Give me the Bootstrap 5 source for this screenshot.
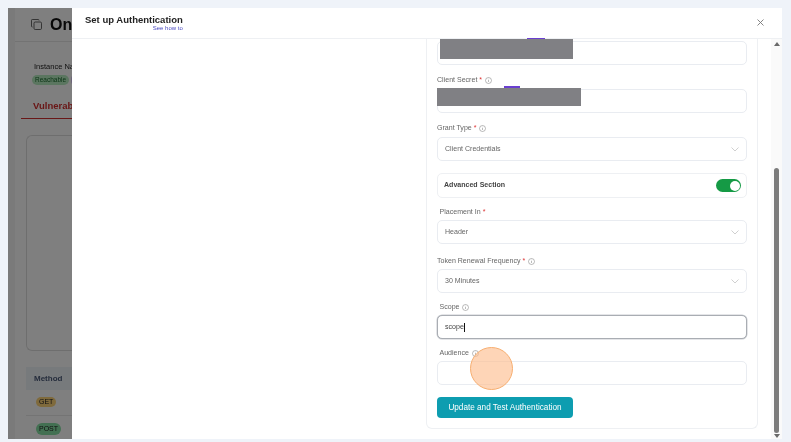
<!DOCTYPE html>
<html lang="en">
<head>
<meta charset="utf-8">
<title>Set up Authentication</title>
<link rel="stylesheet" href="https://cdn.jsdelivr.net/npm/bootstrap@5.3.0/dist/css/bootstrap.min.css">
<style>
html,body{height:100%;overflow:hidden}
body{background:#eff3f9;font-family:"Liberation Sans",Arial,sans-serif;color:#333}
.shot{position:absolute;left:8px;top:8px;width:774px;height:431px;overflow:hidden;background:#fff;filter:blur(.45px)}
/* page behind the dialog */
.under{width:64px;height:431px;background:#fff;overflow:hidden;padding-left:7px;white-space:nowrap;border-left:7px solid #f4f4f4;box-sizing:border-box}
.under-head{height:34px;border-bottom:1px solid #e6e6e6;margin-left:-7px;padding:0 0 0 16px;font-size:16px;font-weight:700;color:#111;line-height:32px}
.under-head svg{flex:none}
.under-meta{font-size:7.5px;color:#222;margin:20px 0 0 12px;line-height:10px}
.under-pillrow{line-height:10px;height:10px;margin:3px 0 0 10px}
.under-pill{font-size:6.5px;border-radius:6px;line-height:10px;padding:0 3px;background:#b7ecc0;color:#186a2d;display:inline-block;vertical-align:top}
.under-pill-b{background:#d9c8f5;width:8px;height:10px;margin-left:2px;padding:0}
.under-tab{margin-top:15px;padding:0 0 7px 12px;color:#d32f2f;font-weight:700;font-size:9.5px;border-bottom:1.5px solid #d32f2f;margin-left:-1px;line-height:11px}
.under-card{height:216px;margin:16px 0 0 4px;border:1px solid #ddd;border-right:0;border-radius:6px 0 0 6px}
.under-th{height:23px;margin:16px 0 0 4px;background:#eff4f9;color:#4a5a78;font-weight:700;font-size:8px;line-height:23px;padding-left:8px}
.under-td{height:26px;margin-left:4px;border-bottom:1px solid #e8e8e8;padding:7px 0 0 10px;line-height:12px}
.verb{display:inline-block;font-size:7px;line-height:10px;padding:0 3px;border-radius:6px;color:#222;vertical-align:top}
.verb-get{background:#ffd479}.verb-post{background:#86e0a4;line-height:12px}
.scrim{position:absolute;inset:0;background:rgba(0,0,0,.5)}
/* dialog */
.dialog{position:absolute;left:64px;top:0;right:0;bottom:0;width:auto;background:#fff;border:0;border-radius:0;display:flex;flex-direction:column}
.dlg-head{height:31px;flex:none;padding:0 13px;border-bottom:1px solid #eef0f3;display:flex;justify-content:space-between;align-items:flex-start}
.dlg-title{font-size:9.5px;font-weight:700;color:#222;line-height:12px;margin-top:6px}
.dlg-sub{font-size:6px;line-height:6px;color:#4a4ac0;text-align:right;margin-top:-1px}
.dlg-x{margin:11px 5px 0 0;display:block}
.dlg-body{flex:1;min-height:0;display:flex;justify-content:flex-end}
.auth-card{width:332px;height:390px;margin-right:13px;border:1px solid #eef0f3;border-top:0;border-radius:0 0 6px 6px;padding:2px 10px 0 10px}
.lbl{display:flex;align-items:center;height:10px;line-height:10px;font-size:7.05px;color:#666;margin:10px 0 4px;white-space:nowrap}
.lbl svg{margin-left:3px}
.lbl-in{padding-left:2.5px;margin:9px 0 3px}
.lbl-far{margin-top:12px;margin-bottom:3px}
.req{color:#d33;margin-left:2px}
.fld{height:24px;border:1px solid #e9ecf1;border-radius:5px;font-size:7.05px;color:#666;padding:0 7px;line-height:22px;box-shadow:none;min-height:0;background-color:#fff}
.fld-drop{background-image:none;display:flex;align-items:center;justify-content:space-between}
.fld-on{border:1px solid #a9adb3;box-shadow:0 0 0 .5px #c9ccd1;color:#444;display:flex;align-items:center}
.caret{display:inline-block;width:.7px;height:9px;background:#111}
.adv-row{height:25px;margin-top:12px;border:1px solid #eef0f3;border-radius:5px;padding:0 5px 0 6px;display:flex;align-items:center;justify-content:space-between;font-size:7.05px;font-weight:700;color:#444}
.toggle{width:25px;height:13px;border-radius:7px;background:#159a45;position:relative;display:block}
.toggle::after{content:"";position:absolute;right:1.5px;top:1.5px;width:10px;height:10px;border-radius:50%;background:#fff}
.go-btn{width:136px;height:21px;margin-top:12px;padding:0;background:#0d9db0;border:0;border-radius:4px;color:#fff;font-size:8.2px;line-height:21px}
.track{width:11px;flex:none;background:#fafafa;display:flex;flex-direction:column;align-items:center;padding:3px 0 1px 0}
.arr-up,.arr-dn{width:0;height:0;border-left:3px solid transparent;border-right:3px solid transparent}
.arr-up{border-bottom:4px solid #6a6a6a}
.arr-dn{border-top:4px solid #6a6a6a}
.thumb{width:5px;height:265px;margin:auto 0 1px;background:#7c7c7c;border-radius:3px}
/* redactions and click marker lie over the form */
.redact{position:absolute;background:#808084}
.redact-a{left:432px;top:31px;width:133px;height:20px}
.redact-b{left:428.5px;top:79.5px;width:144px;height:18.5px}
.tick{position:absolute;background:#6a3fd0;height:1.5px}
.tick-a{left:519px;top:30px;width:18px}
.tick-b{left:496px;top:78px;width:16px}
.spot{position:absolute;left:461.5px;top:339px;width:43px;height:43px;border-radius:50%;background:rgba(253,190,145,.65);border:1.5px solid #f7ae70}
</style>
</head>
<body>
<div class="shot">
  <div class="under">
    <div class="under-head d-flex align-items-center gap-2">
      <svg width="11" height="11" viewBox="0 0 11 11" fill="none" stroke="#444" stroke-width=".8"><rect x="3" y="3" width="7.5" height="7.5" rx="1.2"/><path d="M8 1.5V1.2A.8.8 0 0 0 7.2.5H1.3a.8.8 0 0 0-.8.8v5.9a.8.8 0 0 0 .8.8h.3"/></svg>
      <span>Onl</span>
    </div>
    <div class="under-meta">Instance Na</div>
    <div class="under-pillrow"><span class="under-pill">Reachable</span><span class="under-pill under-pill-b"></span></div>
    <div class="under-tab">Vulnerabi</div>
    <div class="under-card"></div>
    <div class="under-th">Method</div>
    <div class="under-td"><span class="verb verb-get">GET</span></div>
    <div class="under-td"><span class="verb verb-post">POST</span></div>
  </div>
  <div class="scrim"></div>

  <div class="modal-content dialog">
    <div class="dlg-head">
      <div>
        <div class="dlg-title">Set up Authentication</div>
        <div class="dlg-sub">See how to</div>
      </div>
      <svg class="dlg-x" width="7" height="7" viewBox="0 0 7 7" stroke="#777" stroke-width=".9"><path d="M.5.5l6 6M6.5.5l-6 6"/></svg>
    </div>
    <div class="dlg-body">
      <div class="auth-card">
        <div class="form-control fld"></div>

        <div class="lbl">Client Secret<span class="req">*</span><svg width="7" height="7" viewBox="0 0 7 7" fill="none" stroke="#777" stroke-width=".5"><circle cx="3.5" cy="3.5" r="3"/><path d="M3.5 3v2M3.5 1.8v.5"/></svg></div>
        <div class="form-control fld"></div>

        <div class="lbl">Grant Type<span class="req">*</span><svg width="7" height="7" viewBox="0 0 7 7" fill="none" stroke="#777" stroke-width=".5"><circle cx="3.5" cy="3.5" r="3"/><path d="M3.5 3v2M3.5 1.8v.5"/></svg></div>
        <div class="form-control fld fld-drop"><span>Client Credentials</span><svg width="8" height="5" viewBox="0 0 8 5" fill="none" stroke="#bbb" stroke-width=".7"><path d="M.5.5L4 4 7.5.5"/></svg></div>

        <div class="adv-row"><span>Advanced Section</span><span class="toggle"></span></div>

        <div class="lbl lbl-in">Placement In<span class="req">*</span></div>
        <div class="form-control fld fld-drop"><span>Header</span><svg width="8" height="5" viewBox="0 0 8 5" fill="none" stroke="#bbb" stroke-width=".7"><path d="M.5.5L4 4 7.5.5"/></svg></div>

        <div class="lbl lbl-far">Token Renewal Frequency<span class="req">*</span><svg width="7" height="7" viewBox="0 0 7 7" fill="none" stroke="#777" stroke-width=".5"><circle cx="3.5" cy="3.5" r="3"/><path d="M3.5 3v2M3.5 1.8v.5"/></svg></div>
        <div class="form-control fld fld-drop"><span>30 Minutes</span><svg width="8" height="5" viewBox="0 0 8 5" fill="none" stroke="#bbb" stroke-width=".7"><path d="M.5.5L4 4 7.5.5"/></svg></div>

        <div class="lbl lbl-in">Scope<svg width="7" height="7" viewBox="0 0 7 7" fill="none" stroke="#777" stroke-width=".5"><circle cx="3.5" cy="3.5" r="3"/><path d="M3.5 3v2M3.5 1.8v.5"/></svg></div>
        <div class="form-control fld fld-on"><span>scope</span><span class="caret"></span></div>

        <div class="lbl lbl-in">Audience<svg width="7" height="7" viewBox="0 0 7 7" fill="none" stroke="#777" stroke-width=".5"><circle cx="3.5" cy="3.5" r="3"/><path d="M3.5 3v2M3.5 1.8v.5"/></svg></div>
        <div class="form-control fld"></div>

        <button type="button" class="btn go-btn">Update and Test Authentication</button>
      </div>
      <div class="track">
        <span class="arr-up"></span>
        <span class="thumb"></span>
        <span class="arr-dn"></span>
      </div>
    </div>
  </div>

  <div class="tick tick-a"></div>
  <div class="tick tick-b"></div>
  <div class="redact redact-a"></div>
  <div class="redact redact-b"></div>
  <div class="spot"></div>
</div>
<script src="https://cdn.jsdelivr.net/npm/bootstrap@5.3.0/dist/js/bootstrap.bundle.min.js"></script>
</body>
</html>
